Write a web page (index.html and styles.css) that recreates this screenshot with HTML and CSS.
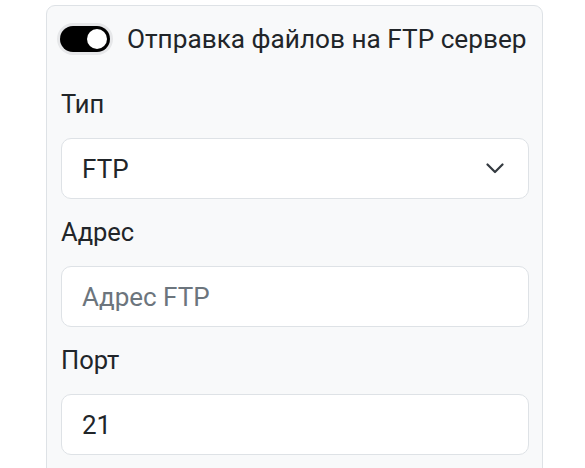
FILE: index.html
```html
<!DOCTYPE html>
<html lang="ru">
<head>
<meta charset="utf-8">
<link rel="stylesheet" href="styles.css">
</head>
<body>
<div class="card">
  <div class="switch-row">
    <span class="switch"><span class="knob"></span></span>
    <span class="switch-label">Отправка файлов на FTP сервер</span>
  </div>
  <div class="group">
    <div class="label">Тип</div>
    <div class="control select">
      <span>FTP</span>
      <svg class="chev" width="18" height="11" viewBox="0 0 18 11"><path d="M1.5 1.5 L9 9 L16.5 1.5" fill="none" stroke="#343a40" stroke-width="2.2" stroke-linecap="round" stroke-linejoin="round"/></svg>
    </div>
  </div>
  <div class="group">
    <div class="label">Адрес</div>
    <div class="control"><span class="placeholder">Адрес FTP</span></div>
  </div>
  <div class="group">
    <div class="label">Порт</div>
    <div class="control"><span>21</span></div>
  </div>
</div>
</body>
</html>
```

FILE: styles.css
```css
html, body {
  margin: 0;
  padding: 0;
  background: #ffffff;
}
body {
  font-family: Roboto, "Liberation Sans", sans-serif;
  color: #212529;
  overflow: hidden;
  height: 468px;
}
.card {
  margin: 5px 0 0 46px;
  width: 497px;
  box-sizing: border-box;
  height: 520px;
  border: 1px solid #dee2e6;
  border-radius: 9px;
  background: #f8f9fa;
  padding: 16px 13px 0 14px;
}
.switch-row {
  display: flex;
  align-items: center;
  height: 34px;
}
.switch {
  position: relative;
  width: 50px;
  height: 26px;
  border-radius: 13px;
  background: #000000;
  box-shadow: 0 0 0 3px #e6e7e9;
  flex: none;
  margin-left: -1px;
}
.knob {
  position: absolute;
  right: 3px;
  top: 3px;
  width: 20px;
  height: 20px;
  border-radius: 50%;
  background: #ffffff;
}
.switch-label {
  margin-left: 17px;
  font-size: 26.2px;
  line-height: 34px;
  white-space: nowrap;
}
.group {
  margin-top: 31px;
}
.group + .group {
  margin-top: 16px;
}
.label {
  font-size: 25.5px;
  line-height: 34px;
  margin-bottom: 17px;
}
.control {
  box-sizing: border-box;
  height: 61px;
  border: 1px solid #dee2e6;
  border-radius: 10px;
  background: #ffffff;
  display: flex;
  align-items: center;
  justify-content: space-between;
  padding: 0 24px 0 20px;
  font-size: 26px;
}
.placeholder {
  color: #6c757d;
}
.chev {
  display: block;
}
```
